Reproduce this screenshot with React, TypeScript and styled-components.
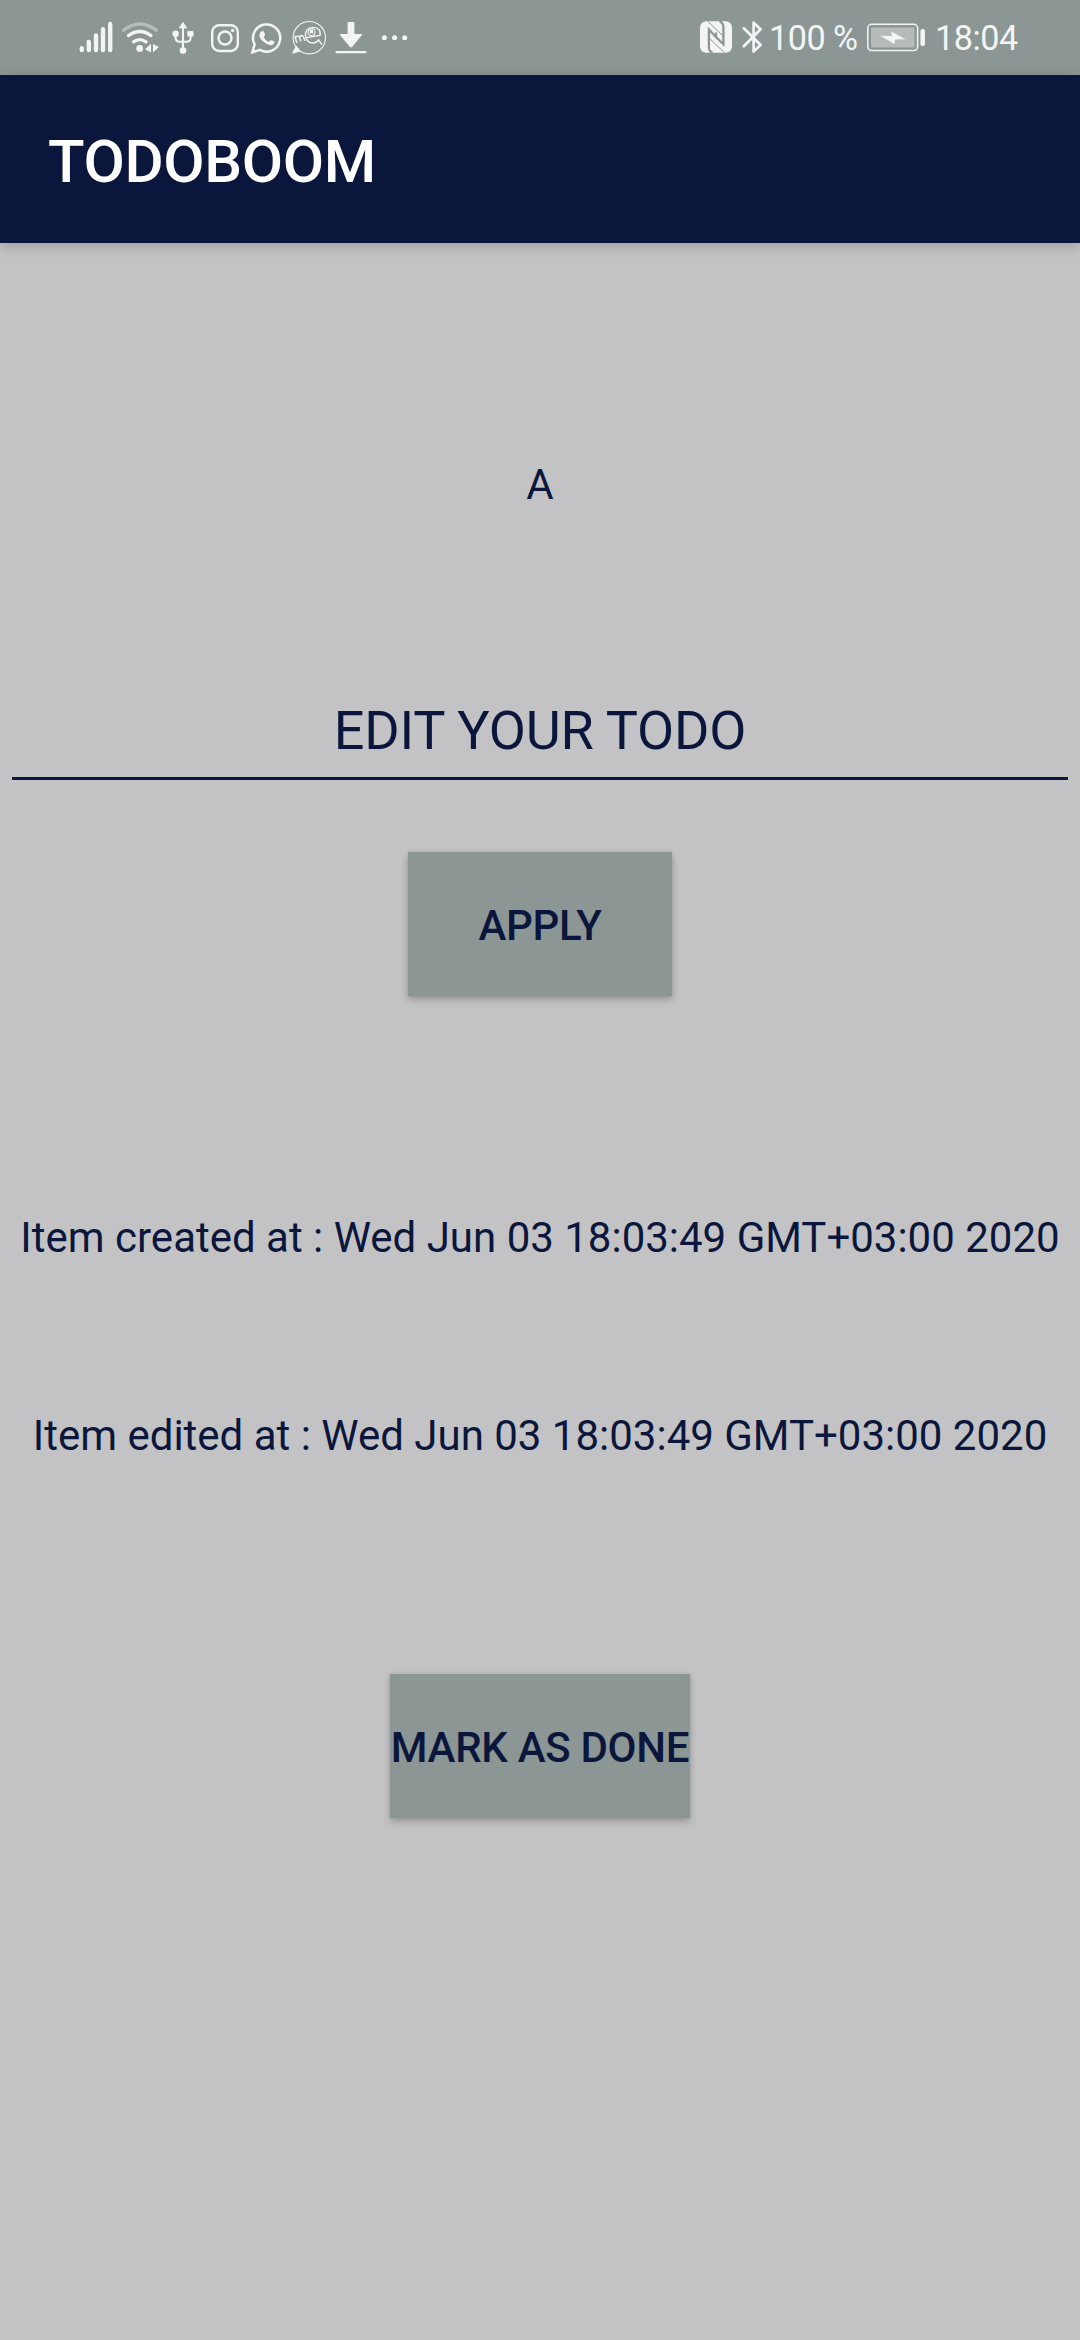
import React from "react";
import styled, { createGlobalStyle } from "styled-components";

const INK = "#0a163b";
const SAGE = "#8c9694";
const LIGHT = "#f3f5f5";

const GlobalStyle = createGlobalStyle`
  *, *::before, *::after { box-sizing: border-box; }
  html, body { margin: 0; padding: 0; background: #c3c3c5; }
  body { font-family: Roboto, "Noto Sans", sans-serif; }
`;

const Screen = styled.div`
  width: 1080px;
  height: 2340px;
  display: flex;
  flex-direction: column;
  background: #c3c3c5;
  overflow: hidden;
`;

const StatusBar = styled.header`
  height: 75px;
  flex: none;
  display: flex;
  align-items: center;
  justify-content: space-between;
  padding: 0 61px 0 78px;
  background: ${SAGE};
  color: ${LIGHT};
`;

const StatusGroup = styled.div`
  display: flex;
  align-items: center;
  height: 75px;
`;

const Glyph = styled.svg<{ $w: number; $gap?: number }>`
  display: block;
  flex: none;
  width: ${(p) => p.$w}px;
  height: 75px;
  margin-left: ${(p) => p.$gap ?? 0}px;
  overflow: visible;
`;

const StatusText = styled.span<{ $w: number; $gap: number }>`
  width: ${(p) => p.$w}px;
  margin-left: ${(p) => p.$gap}px;
  font-size: 34.2px;
  letter-spacing: -0.5px;
  line-height: 40px;
  white-space: nowrap;
`;

const AppBar = styled.div`
  height: 168px;
  flex: none;
  display: flex;
  align-items: center;
  padding: 6px 48px 0;
  background: ${INK};
  box-shadow: 0 4px 12px rgba(0, 0, 0, 0.18);
`;

const Title = styled.h1`
  margin: 0;
  color: #fff;
  font-size: 60px;
  line-height: 70px;
  font-weight: 500;
  letter-spacing: -0.35px;
`;

const Content = styled.main`
  flex: 1;
  display: flex;
  flex-direction: column;
  align-items: center;
  color: ${INK};
`;

const Line = styled.p<{ $top: number }>`
  margin: ${(p) => p.$top}px 0 0;
  font-size: 42px;
  line-height: 50px;
  white-space: nowrap;
`;

const Field = styled.div`
  width: 1056px;
  height: 89px;
  margin-top: 181px;
  padding-top: 8px;
  border-bottom: 3px solid ${INK};
  font-size: 54px;
  line-height: 64px;
  letter-spacing: -0.2px;
  text-align: center;
`;

const Button = styled.button<{ $w: number; $top: number }>`
  width: ${(p) => p.$w}px;
  height: 144px;
  flex: none;
  margin: ${(p) => p.$top}px 0 0;
  padding: 3px 0 0;
  border: 0;
  background: ${SAGE};
  color: ${INK};
  font-family: inherit;
  font-size: 42px;
  line-height: 50px;
  font-weight: 500;
  letter-spacing: -0.3px;
  white-space: nowrap;
  box-shadow: 0 4px 7px rgba(0, 0, 0, 0.2), 0 0 4px rgba(0, 0, 0, 0.1);
`;

const Signal = () => (
  <Glyph $w={36} viewBox="78 0 36 75" stroke={LIGHT} strokeWidth="4.4" strokeLinecap="round">
    <path d="M81.8 48.3V50M88.8 42V50M96 35.5V50M103 29.3V50M110.2 24V50" />
  </Glyph>
);

const Wifi = () => (
  <Glyph $w={38} $gap={7} viewBox="121 0 38 75" fill="none" strokeWidth="3.3" strokeLinecap="round">
    <path d="M123.5 30.3Q139.8 17.6 156.4 30.3" stroke="#b7bebd" />
    <path d="M128.4 35.6Q139.8 27.4 151 35.6" stroke={LIGHT} />
    <path d="M133.5 41.9Q139.8 37.3 146 41.9" stroke={LIGHT} />
    <circle cx="139.7" cy="48.4" r="3.4" fill={LIGHT} />
    <path d="M145 49.2L151 43.8V52.6ZM153 44L158.8 47L153 52.6Z" fill={LIGHT} />
  </Glyph>
);

const Usb = () => (
  <Glyph $w={22} $gap={13} viewBox="172 0 22 75" fill={LIGHT}>
    <path d="M183 21.8L187.3 28.3H178.7Z" />
    <path d="M183 26V50M175.6 34V37.5Q175.6 41.7 179.6 41.7H186.6Q190.6 41.7 190.6 37.5V34" fill="none" stroke={LIGHT} strokeWidth="2.1" />
    <circle cx="175.6" cy="33.7" r="3.2" />
    <rect x="187.3" y="31" width="6.2" height="5.6" rx="1" />
    <circle cx="183" cy="50.6" r="3.3" />
  </Glyph>
);

const Instagram = () => (
  <Glyph $w={28} $gap={17} viewBox="211 0 28 75" fill="none" stroke={LIGHT} strokeWidth="2.4">
    <rect x="212.2" y="25.2" width="25.6" height="25.8" rx="7" />
    <circle cx="225" cy="38" r="6.5" />
    <circle cx="232.6" cy="30.5" r="1.7" fill={LIGHT} stroke="none" />
  </Glyph>
);

const WhatsApp = () => (
  <Glyph $w={31} $gap={12} viewBox="251 0 31 75">
    <path
      d="M252.4 52.3L254.6 44.4A13.6 13.6 0 1 1 260 49.9Z"
      fill="none"
      stroke={LIGHT}
      strokeWidth="2.5"
    />
    <path
      d="M262.3 31.3Q260 31.6 259.4 35Q259.4 38.5 263.6 42Q268 45.5 271.3 45.2Q274.4 44.5 274.5 41.8Q272.8 40.3 270.8 39.9L268.8 42Q265.3 40.5 263.6 37.2L265 35.4Q264.9 33 263.7 31.3Z"
      fill={LIGHT}
    />
  </Glyph>
);

const MeBubble = () => (
  <Glyph $w={35} $gap={10} viewBox="292 0 35 75" fill="none" stroke={LIGHT} strokeWidth="1.1">
    <circle cx="309.3" cy="37.7" r="16.2" />
    <path d="M292.8 53L296.2 46.5L300 51.2Z" fill={LIGHT} />
    <path d="M294.8 35.6L296.8 43M295.5 37.4Q299.3 33.2 300.7 41.4M299.8 36.8Q303.3 33 304.8 41" strokeWidth="1.5" />
    <path d="M306.4 37.6L320 35.4Q321.4 27.6 312.6 27.4Q304.6 28.4 305.6 36.4Q307 43.4 313.6 43Q317 42.4 318.6 40L322 44.6" strokeWidth="1.4" />
    <circle cx="311.6" cy="32.2" r="3.4" />
    <path d="M310.3 30.4H312.5V32.7H310.3Z" fill={LIGHT} />
  </Glyph>
);

const Download = () => (
  <Glyph $w={31} $gap={8} viewBox="335 0 31 75" fill={LIGHT}>
    <path d="M348.6 22H353.4Q354.4 22 354.4 23V34H361.2Q362.8 34 361.6 35.4L352.2 46.8Q351 48.2 349.8 46.8L340.4 35.4Q339.2 34 340.8 34H347.6V23Q347.6 22 348.6 22Z" />
    <rect x="335.5" y="51" width="31" height="2.3" rx="1" />
  </Glyph>
);

const More = () => (
  <Glyph $w={26} $gap={16} viewBox="382 0 26 75" fill={LIGHT}>
    <circle cx="384.4" cy="37.8" r="2.5" />
    <circle cx="394.6" cy="37.8" r="2.5" />
    <circle cx="404.7" cy="37.8" r="2.5" />
  </Glyph>
);

const Nfc = () => (
  <Glyph $w={32} viewBox="700 0 32 75">
    <rect x="700" y="21.3" width="32" height="31.5" rx="6" fill={LIGHT} />
    <path
      d="M712.5 52.8Q708.9 51.5 708.9 47V29.5L716 37V32.5M719.5 21.3Q723.4 22.5 723.4 27V44.3L716 37"
      fill="none"
      stroke={SAGE}
      strokeWidth="2.3"
    />
    <path d="M707.6 21.3L722.6 35.5M709.6 38.5L724.4 52.6" fill="none" stroke={SAGE} strokeWidth="1" />
  </Glyph>
);

const Bluetooth = () => (
  <Glyph $w={20} $gap={10} viewBox="742 0 20 75" fill="none" stroke={LIGHT} strokeWidth="2.7" strokeLinejoin="round" strokeLinecap="round">
    <path d="M743.8 28.3L760.6 45L753.6 51.6V22.7L760.6 29.3L743.8 46.2" />
  </Glyph>
);

const Battery = () => (
  <Glyph $w={58} $gap={9} viewBox="867 0 58 75">
    <rect x="867.8" y="24.3" width="49.8" height="26.2" rx="3.8" fill="none" stroke={LIGHT} strokeWidth="1.5" />
    <rect x="871" y="27.5" width="43.5" height="20" rx="1" fill="#b5bbba" />
    <path d="M880.4 35.8L892 35.9L891 31.3L905.5 39.2L895.3 39.4L894.3 44Z" fill={LIGHT} />
    <rect x="920.4" y="29" width="4.6" height="17" rx="2" fill={LIGHT} />
  </Glyph>
);

export default function App() {
  return (
    <>
      <GlobalStyle />
      <Screen>
        <StatusBar>
          <StatusGroup>
            <Signal />
            <Wifi />
            <Usb />
            <Instagram />
            <WhatsApp />
            <MeBubble />
            <Download />
            <More />
          </StatusGroup>
          <StatusGroup>
            <Nfc />
            <Bluetooth />
            <StatusText $w={89} $gap={7}>100 %</StatusText>
            <Battery />
            <StatusText $w={84} $gap={10}>18:04</StatusText>
          </StatusGroup>
        </StatusBar>
        <AppBar>
          <Title>TODOBOOM</Title>
        </AppBar>
        <Content>
          <Line $top={217}>A</Line>
          <Field>EDIT YOUR TODO</Field>
          <Button $w={264} $top={72}>APPLY</Button>
          <Line $top={217}>Item created at : Wed Jun 03 18:03:49 GMT+03:00 2020</Line>
          <Line $top={148}>Item edited at : Wed Jun 03 18:03:49 GMT+03:00 2020</Line>
          <Button $w={300} $top={213}>MARK AS DONE</Button>
        </Content>
      </Screen>
    </>
  );
}
